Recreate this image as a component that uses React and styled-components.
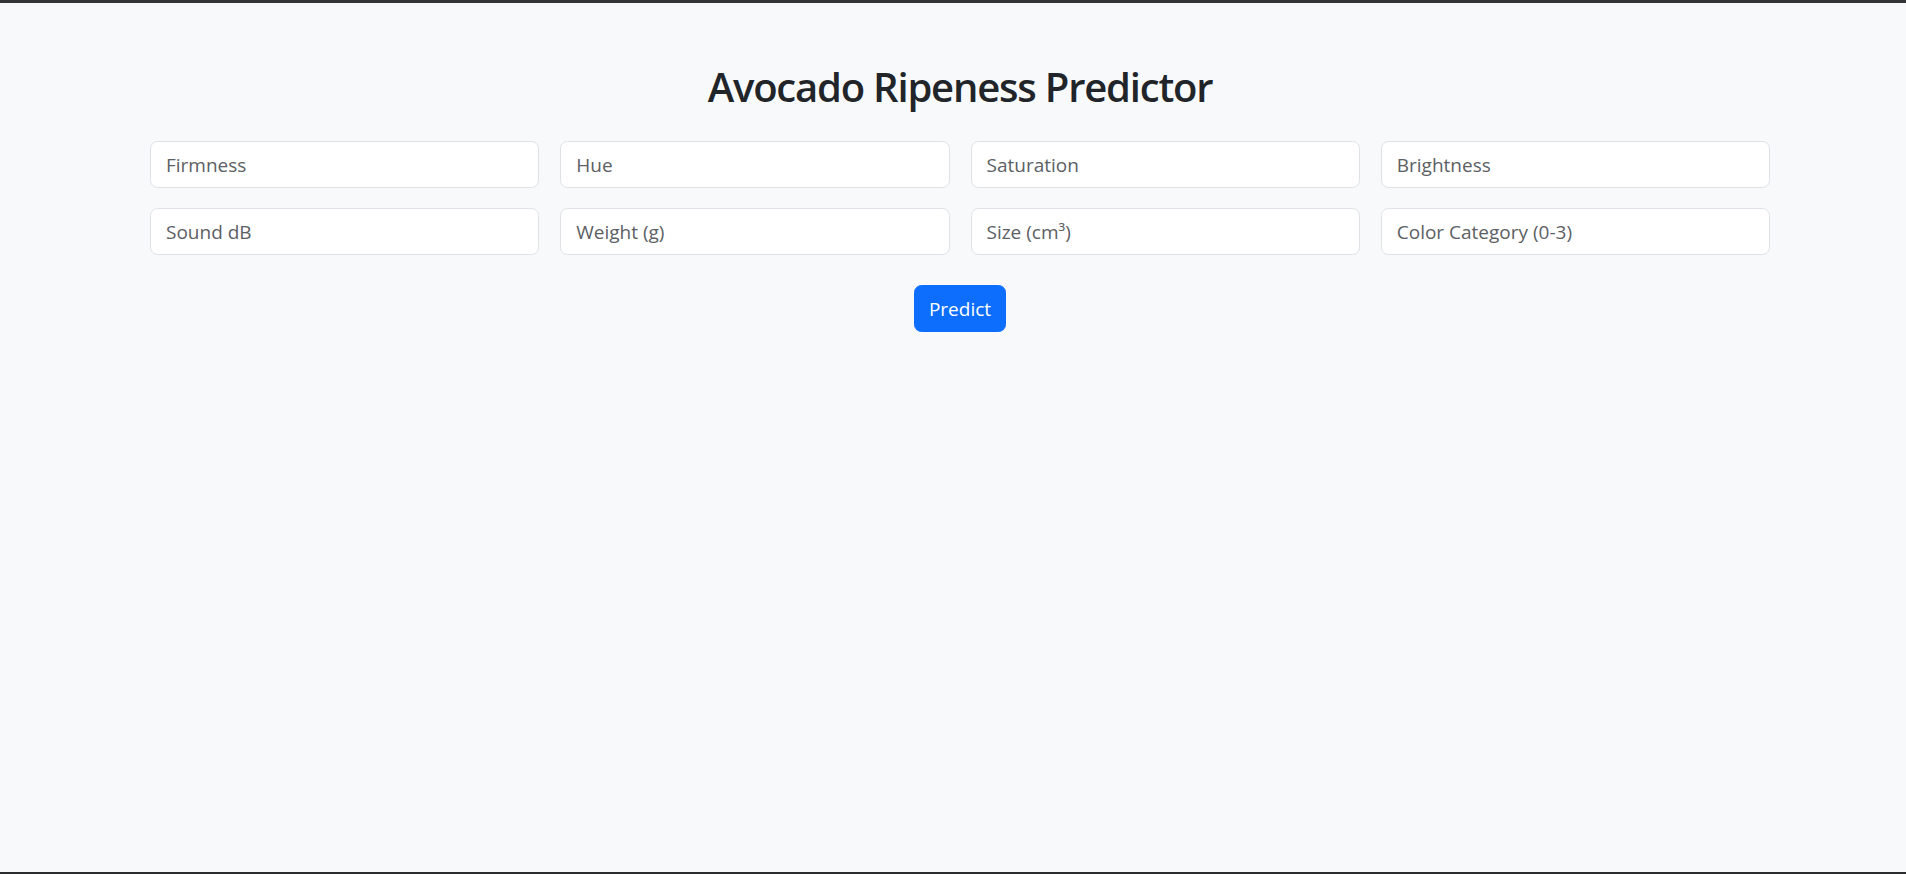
import React from "react";
import styled, { createGlobalStyle } from "styled-components";

const GlobalStyle = createGlobalStyle`
  html, body { margin: 0; padding: 0; }
  body {
    background: #f8f9fa;
    font-family: "Open Sans", "Noto Sans", "Liberation Sans", sans-serif;
    color: #212529;
  }
  * { box-sizing: border-box; }
`;

const Frame = styled.div`
  height: 874px;
  border-top: 3px solid #333436;
  border-bottom: 2px solid #2b2c2e;
  background: #f8f9fa;
  padding-left: 14px;
  overflow: hidden;
`;

const Container = styled.main`
  max-width: 1620px;
  margin: 0 auto;
  padding-top: 60px;
  display: flex;
  flex-direction: column;
  align-items: center;
`;

const Title = styled.h2`
  margin: 0 0 30px;
  font-size: 40px;
  line-height: 48px;
  font-weight: 600;
  letter-spacing: -1.2px;
  color: #212529;
  text-align: center;
`;

const FieldGrid = styled.div`
  width: 100%;
  display: grid;
  grid-template-columns: repeat(4, 1fr);
  column-gap: 21px;
  row-gap: 20px;
`;

const Field = styled.input`
  display: block;
  width: 100%;
  height: 47px;
  padding: 0 15px;
  border: 1px solid #dee2e6;
  border-radius: 7.5px;
  background: #ffffff;
  font-family: inherit;
  font-size: 19px;
  color: #212529;
  outline: none;
  &::placeholder {
    color: #5c6064;
    opacity: 1;
  }
`;

const PredictButton = styled.button`
  margin-top: 30px;
  height: 47px;
  padding: 0 14px;
  border: 1px solid #0d6efd;
  border-radius: 7.5px;
  background: #0d6efd;
  color: #ffffff;
  font-family: inherit;
  font-size: 19px;
  cursor: pointer;
`;

const fields = [
  "Firmness",
  "Hue",
  "Saturation",
  "Brightness",
  "Sound dB",
  "Weight (g)",
  "Size (cm³)",
  "Color Category (0-3)",
];

export default function App() {
  return (
    <>
      <GlobalStyle />
      <Frame>
        <Container>
          <Title>Avocado Ripeness Predictor</Title>
          <FieldGrid>
            {fields.map((f) => (
              <Field key={f} type="text" placeholder={f} />
            ))}
          </FieldGrid>
          <PredictButton type="button">Predict</PredictButton>
        </Container>
      </Frame>
    </>
  );
}
